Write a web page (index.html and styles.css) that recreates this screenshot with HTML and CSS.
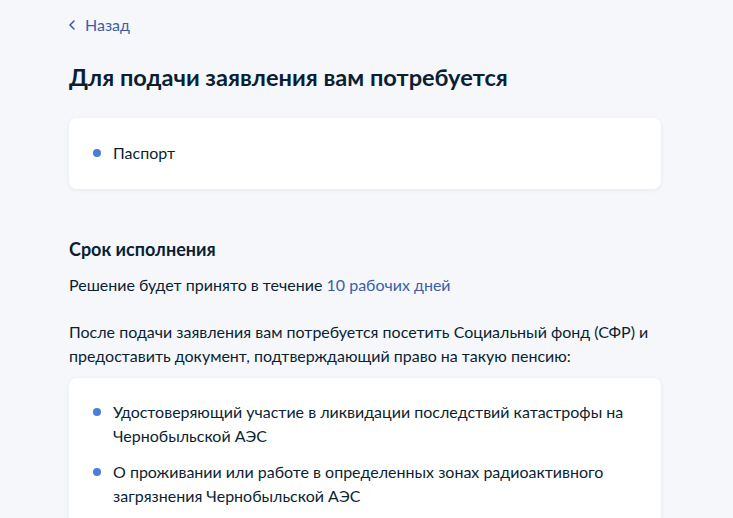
FILE: index.html
```html
<!DOCTYPE html>
<html lang="ru">
<head>
<meta charset="utf-8">
<link rel="stylesheet" href="styles.css">
</head>
<body>
<main class="page">
  <a class="back" href="#">
    <svg class="chev" width="8" height="12" viewBox="0 0 8 12"><path d="M6 2 L2 6 L6 10" fill="none" stroke="currentColor" stroke-width="1.6" stroke-linecap="round" stroke-linejoin="round"/></svg>
    <span>Назад</span>
  </a>
  <h1 class="title">Для подачи заявления вам потребуется</h1>
  <section class="card card-one">
    <ul class="list">
      <li>Паспорт</li>
    </ul>
  </section>
  <h2 class="subtitle">Срок исполнения</h2>
  <p class="text">Решение будет принято в течение <a class="link" href="#">10 рабочих дней</a></p>
  <p class="text para">После подачи заявления вам потребуется посетить Социальный фонд (СФР) и предоставить документ, подтверждающий право на такую пенсию:</p>
  <section class="card card-two">
    <ul class="list">
      <li>Удостоверяющий участие в ликвидации последствий катастрофы на Чернобыльской АЭС</li>
      <li>О проживании или работе в определенных зонах радиоактивного загрязнения Чернобыльской АЭС</li>
    </ul>
  </section>
</main>
</body>
</html>
```

FILE: styles.css
```css
html, body {
  margin: 0;
  padding: 0;
  background: #f5f7fb;
}
body {
  font-family: Lato, "Noto Sans", sans-serif;
  color: #0b1f33;
  font-size: 16px;
  line-height: 24px;
  overflow: hidden;
  height: 518px;
}
.page {
  width: 592px;
  margin-left: 69px;
  padding-top: 13px;
}
.back {
  display: flex;
  align-items: center;
  gap: 9px;
  color: #3b5ea8;
  text-decoration: none;
  font-size: 16px;
  line-height: 24px;
}
.chev {
  display: block;
  margin-left: -1px;
}
.title {
  margin: 24px 0 0;
  font-size: 23.6px;
  line-height: 32px;
  font-weight: 700;
}
.card {
  background: #fff;
  border-radius: 8px;
  box-shadow: 0 1px 4px rgba(30, 60, 120, 0.08);
}
.card-one {
  margin-top: 25px;
  padding: 23px 24px 24px;
}
.list {
  list-style: none;
  margin: 0;
  padding: 0;
}
.list li {
  position: relative;
  padding-left: 20px;
}
.list li::before {
  content: "";
  position: absolute;
  left: 0;
  top: 8px;
  width: 8px;
  height: 8px;
  border-radius: 50%;
  background: #4a7ddc;
}
.card-two {
  margin-top: 10px;
  padding: 22px 24px 24px;
}
.card-two .list li + li {
  margin-top: 12px;
}
.subtitle {
  margin: 48px 0 0;
  font-size: 18px;
  line-height: 24px;
  font-weight: 700;
}
.text {
  margin: 12px 0 0;
}
.para {
  margin-top: 23px;
}
.link {
  color: #3b5ea8;
  text-decoration: none;
}
```
